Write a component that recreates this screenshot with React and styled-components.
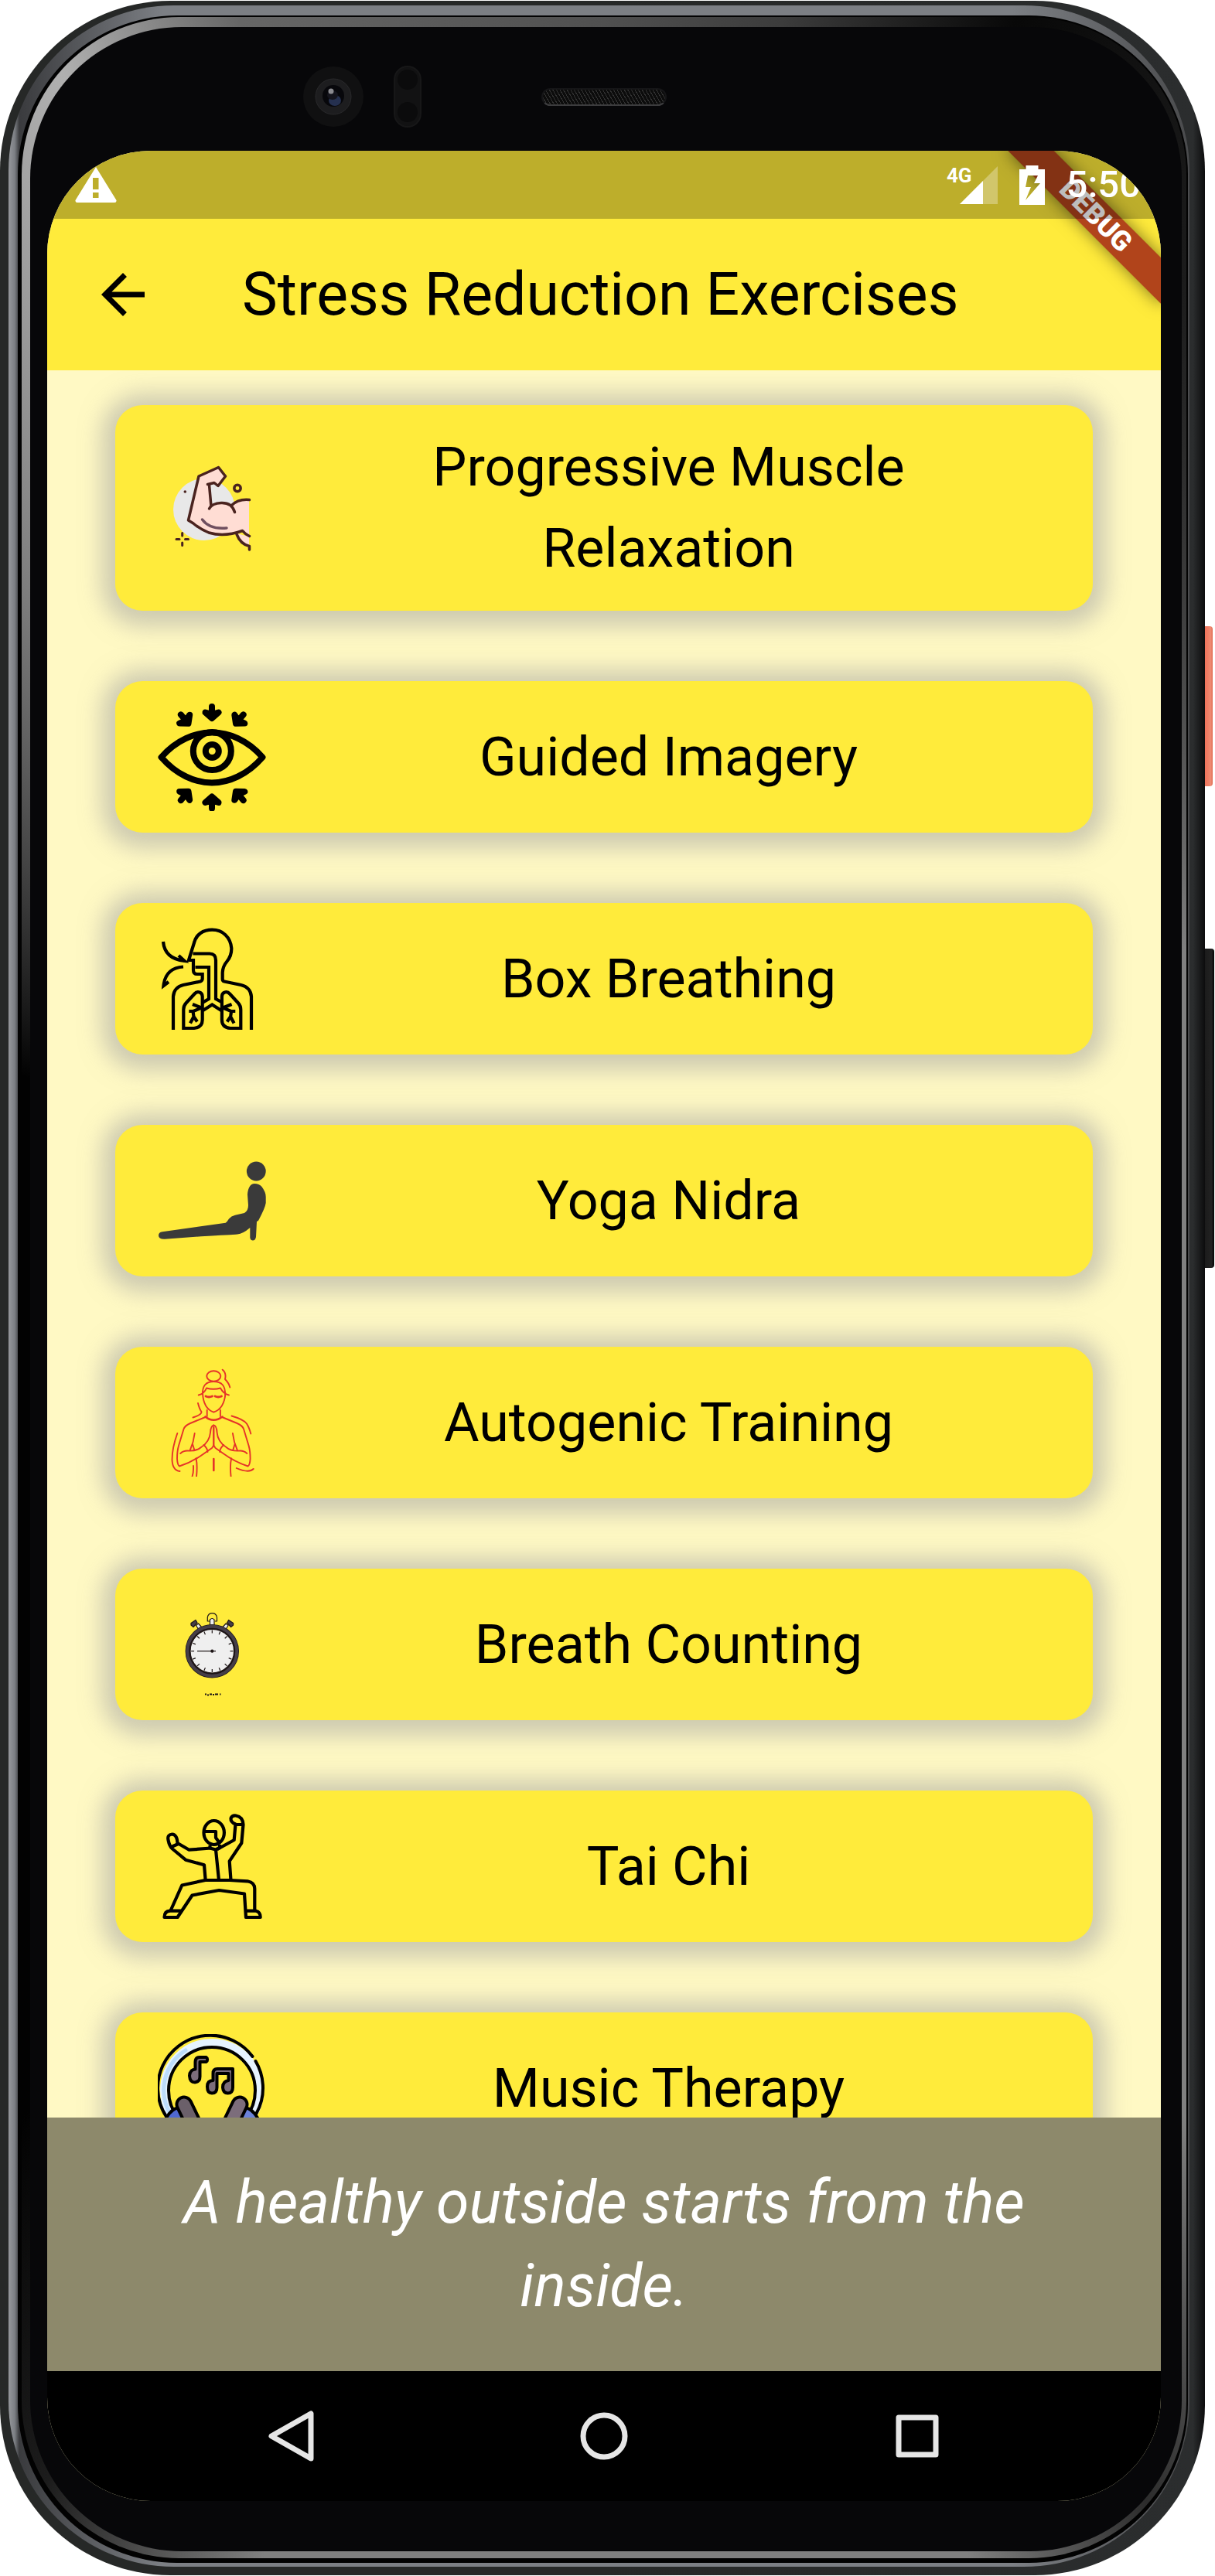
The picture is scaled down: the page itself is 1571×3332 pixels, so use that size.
import React from "react";
import styled, { createGlobalStyle, css } from "styled-components";

const yellow = "#ffeb3b";

const GlobalStyle = createGlobalStyle`
  *, *::before, *::after { box-sizing: border-box; }
  body {
    margin: 0;
    background: #fff;
    font-family: Roboto, "Noto Sans", sans-serif;
    color: #000;
  }
  button {
    margin: 0;
    padding: 0;
    border: 0;
    background: none;
    color: inherit;
    font: inherit;
    cursor: pointer;
  }
  ul { margin: 0; padding: 0; list-style: none; }
  svg { display: block; flex: none; }
`;

/* ---------- Phone body ---------- */

const Phone = styled.div`
  position: relative;
  z-index: 0;
  display: flex;
  height: calc(100vh - 2px);
  margin: 1px 13px 1px 0;
`;

const layer = css`
  display: flex;
  flex: 1;
  min-width: 0;
  min-height: 0;
`;

const Shell = styled.div`
  ${layer}
  padding: 6px 20px 11px 11px;
  border-radius: 220px;
  background: linear-gradient(to right, #262827 0 50%, #2b2d2e 99%, #0c0c0d);
`;

const Metal = styled.div`
  ${layer}
  padding: 13px 2px 5px 12px;
  border-radius: 214px;
  background: linear-gradient(to right, #96989c 0, #7c7f84 8px, #3a3b3e 14px, #7c7f84 200px, #7c7f84 85%, #4a4b4d);
`;

const Seam = styled.div`
  ${layer}
  padding: 2px 2px 6px 5px;
  border-radius: 206px;
  background: #020202;
`;

const Gloss = styled.div`
  ${layer}
  padding: 13px 6px 9px 11px;
  border-radius: 204px;
  background: conic-gradient(
    #505050 0deg, #3c3c3c 8deg, #080808 18deg, #1c1c1c 30deg,
    #808080 60deg, #808080 145deg, #2c2c2c 156deg, #808080 164deg,
    #808080 195deg, #1c1c1c 205deg, #020202 215deg, #020202 290deg,
    #7c7c7c 320deg, #b0b0b0 336deg, #666 344deg, #505050 360deg
  );
`;

const Glass = styled.div`
  ${layer}
  flex-direction: column;
  padding: 0 27px 65px 22px;
  border-radius: 196px;
  background: #070709;
`;

const SideButton = styled.span`
  position: absolute;
  z-index: -1;
  right: -${(p) => p.$reach}px;
  top: ${(p) => p.$top}px;
  width: 24px;
  height: ${(p) => p.$length}px;
  border-radius: 4px;
  background: ${(p) => p.$fill};
`;

const Sensors = styled.div`
  display: grid;
  grid-template-columns: 1fr auto 1fr;
  align-items: center;
  column-gap: 155px;
  height: 160px;
  padding-top: 20px;
  flex: none;
`;

const SensorGroup = styled.div`
  display: flex;
  justify-content: flex-end;
  gap: 38px;
`;

const Earpiece = styled.div`
  width: 162px;
  height: 23px;
  border: 2px solid #151517;
  border-bottom-color: #3c3c3e;
  border-radius: 12px;
  background: repeating-linear-gradient(60deg, #333 0 1px, #0c0c0c 1px 4px);
`;

/* ---------- Screen ---------- */

const Screen = styled.div`
  ${layer}
  flex-direction: column;
  overflow: hidden;
  border-radius: 134px;
  background: #fff9c4;
`;

const Header = styled.header`
  position: relative;
  z-index: 1;
  flex: none;
  background: ${yellow};
`;

const StatusBar = styled.div`
  position: relative;
  z-index: 2;
  display: flex;
  align-items: center;
  justify-content: space-between;
  height: 88px;
  padding: 0 26px 0 36px;
  background: rgba(0, 0, 0, 0.26);
  color: #fff;
`;

const StatusGroup = styled.div`
  display: flex;
  align-items: center;
  gap: 28px;
`;

const Clock = styled.span`
  font-size: 49px;
  font-weight: 500;
  line-height: 56px;
`;

const Network = styled.span`
  display: flex;
  align-items: flex-start;
`;

const NetworkType = styled.span`
  margin-right: -16px;
  font-size: 26px;
  font-weight: 700;
  line-height: 24px;
`;

const TitleBar = styled.div`
  display: flex;
  align-items: center;
  height: 196px;
`;

const BackButton = styled.button`
  display: flex;
  align-items: center;
  justify-content: center;
  width: 196px;
  height: 196px;
`;

const Title = styled.h1`
  margin: 0 0 0 56px;
  font-size: 77px;
  font-weight: 400;
  line-height: 90px;
`;

const DebugBanner = styled.span`
  position: absolute;
  z-index: 1;
  top: 63px;
  right: -56px;
  width: 280px;
  height: 42px;
  transform: rotate(45deg);
  background: rgba(155, 20, 18, 0.78);
  box-shadow: 0 0 21px rgba(0, 0, 0, 0.5);
  color: #fff;
  font-size: 36px;
  font-weight: 900;
  line-height: 42px;
  text-align: center;
`;

const List = styled.ul`
  display: flex;
  flex: 1;
  flex-direction: column;
  gap: 91px;
  min-height: 0;
  overflow: hidden;
  padding: 45px 88px 0;
`;

const Card = styled.button`
  display: flex;
  align-items: center;
  gap: 56px;
  width: 100%;
  padding: 28px 84px 28px 55px;
  border-radius: 35px;
  background: ${yellow};
  box-shadow: 0 3px 29px 17px rgba(158, 158, 158, 0.5);
`;

const CardLabel = styled.span`
  flex: 1;
  font-size: 70px;
  line-height: 105px;
  text-align: center;
`;

const Quote = styled.p`
  flex: none;
  margin: 0;
  padding: 56px 84px;
  background: #8d896b;
  color: #fff;
  font-size: 77px;
  font-style: italic;
  line-height: 108px;
  text-align: center;
`;

const SystemNav = styled.nav`
  display: grid;
  grid-template-columns: repeat(3, 1fr);
  flex: none;
  height: 168px;
  padding: 0 112px;
  background: #000;
`;

const NavButton = styled.button`
  display: flex;
  align-items: center;
  justify-content: center;
`;

/* ---------- Drawings ---------- */

const Icon = ({ children, ...rest }) => (
  <svg width="140" height="140" viewBox="0 0 140 140" fill="none" aria-hidden="true" {...rest}>
    {children}
  </svg>
);

const MuscleIcon = () => (
  <Icon strokeLinecap="round" strokeLinejoin="round">
    <circle cx="60" cy="72" r="40" fill="#e8e8e8" />
    <path
      d="M53 29 78 17.500 87.500 28.500 78 41 73 37.500 66.500 40 69 68Q82 60 95 67 105 58 118 59.500V107L109.500 99.500Q80 109 63 101 54 96 46 90L39.500 86Z"
      fill="#ffddd4"
    />
    <path d="M102 103 118 107V119Q106 115 102 103Z" fill="#ffddd4" />
    <g stroke="#4a231f" strokeWidth="3.500">
      <path d="M64.500 39.500 73 37.500 78 41.500 87.500 29 78.500 17.500 53 29 39.500 86 46 90Q54 97 66 102 86 108 109.500 99.500 113 104 118.500 106.500" />
      <path d="M66.500 40 69 68M66.500 71Q70 64 82 63.500 96 63 99.500 75.500M95 67Q104 58 118.500 59.500" />
      <path d="M102 104Q107 117 118.500 119.500V124" />
      <circle cx="103" cy="44.500" r="4.200" />
      <path d="M31.700 102.500V106M31.700 115V118.500M24 110.500H28M35.500 110.500H39.500" strokeWidth="3" />
    </g>
    <path d="M57.500 85Q67 98 89 96" stroke="#6f4f5f" strokeWidth="3.500" />
    <circle cx="35.300" cy="49" r="1.800" fill="#4a231f" />
  </Icon>
);

const inwardArrows = [
  [70, 13, 0],
  [35, 21.5, -40],
  [105.5, 21.5, 40],
  [70, 128.5, 180],
  [35, 120, 220],
  [105.5, 120, 140],
];

const EyeIcon = () => (
  <Icon stroke="#000" strokeWidth="8" strokeLinecap="round" strokeLinejoin="round">
    <path d="M4.500 70.500C24 48 48 38.500 70 38.500S116 48 135.500 70.500C116 93 92 103.500 70 103.500S24 93 4.500 70.500Z" />
    <circle cx="70.300" cy="62.500" r="24.500" />
    <circle cx="70.300" cy="62.500" r="8.500" />
    {inwardArrows.map(([x, y, turn]) => (
      <path
        key={`${x}-${y}`}
        transform={`translate(${x} ${y}) rotate(${turn})`}
        d="M0-8V2M-8.500-.5 0 7 8.500-.5 0 2Z"
      />
    ))}
  </Icon>
);

const Lung = ({ flip }) => (
  <g transform={flip ? "translate(140.600 0) scale(-1 1)" : undefined}>
    <path d="M57.700 93C57.700 87 51 85.500 47.500 89.500L36.500 101.500Q33.300 105 33.300 110V134H47Q57.700 133 57.700 123Z" />
    <path d="M57.700 108 45 103M40.300 112H46L57.700 107M45.500 112 46.500 119 42 127.500M46.500 119 51 125.500" />
  </g>
);

const BreathingIcon = () => (
  <Icon stroke="#000" strokeWidth="4.200">
    <path d="M121 136V93Q120 81 107.500 78L86 73.500Q83.700 73 83.700 70.500V62Q84 54 89.500 47.500C94 42 95.500 37 95.300 30.500 94 16 84 6.700 70.300 6.700 58 6.700 50 13 47.500 22L40 46H46V59Q46 64 51 64H57.700V70Q57.700 72.500 55 73.500L33 78Q21 81 20 93V136" />
    <path d="M45.500 37.500H67Q75 37.500 75 46V96L84 101M48.500 55H66V96L57.700 101M58.500 111 70.300 103.500 82 111" />
    <path d="M7 22Q9 44 34.500 47L27 40M33 54.500Q10 56 7.500 79L14 74" />
    <Lung />
    <Lung flip />
  </Icon>
);

const YogaIcon = () => (
  <Icon fill="#3a3a3a">
    <circle cx="127.300" cy="32" r="12.400" />
    <path d="M119 51.500Q121 48 125 48 131 48 134.500 52 139.700 59 139.700 65V73Q139 79 130 96L128 97 127 117Q126 121.500 123 121.500 120 121.500 119.300 118V105Q110 113 103 113.500T56 116.300L9 119.700Q1 120 1 115 1 111 6 110.300L87.700 98.700Q90 97 92 93.500 95 90 100 88.700L112 86Q117 83 117 76L116 62Q116.500 55 119 51.500Z" />
  </Icon>
);

const PrayerSide = ({ flip }) => (
  <g transform={flip ? "translate(144.600 0) scale(-1 1)" : undefined}>
    <path d="M61.500 63 42 71Q35 74 33.500 78.500L27 100Q25 107 25 117 25.500 125 28 126.500 45 121 60 110L70 103Q72.300 101 72.300 98V76" />
    <path d="M29.300 110Q33 106.500 38 106.500 50 107.500 56 102 67 95 68 83 68.500 74 72.300 73.500" />
    <path d="M59.500 99Q64 103 64.500 108M47.700 84Q46.500 95 41.700 106M45 98 47.500 106M49.500 116.500Q51.500 125 50 140M63.700 54V62" />
  </g>
);

const MeditationIcon = () => (
  <Icon stroke="#e53329" strokeWidth="1.900" strokeLinecap="round" strokeLinejoin="round">
    <ellipse cx="72.300" cy="10" rx="9" ry="6.800" />
    <path d="M58 32Q59 52 72.300 56.700 86 52 87.500 32M58 34Q57 17 72.300 17 88 17 87 34M52.700 34.500Q60 33 63 25.500 72 28 81 25.500 85 33 92 34.500" />
    <path d="M62 36Q66 38 70.500 36M74 36Q78 38 82.500 36" strokeWidth="2.800" />
    <path d="M61.500 62.500Q72 71 83.500 62.500" strokeWidth="2.600" />
    <PrayerSide />
    <PrayerSide flip />
    <path d="M72.300 117V132" strokeWidth="2.600" />
    <path d="M25.300 84Q18.500 103 18.500 118 19 132 28.500 133M46 126Q46.500 134 44.500 140M95.500 61.500Q111 66 115 71.500 118 76 120.300 84.500M101.700 129Q118 136 123.700 130M83.700 1.700Q89 6 87 14 92 19 93.300 24.500M52 45Q54 53 56.500 56 57 60 45.500 63.500" />
  </Icon>
);

const WatchKnob = ({ flip }) => (
  <g transform={flip ? "translate(140.600 0) scale(-1 1)" : undefined}>
    <path d="M49.500 45.500 52.500 43 57 48 53 51Z" fill="#eee" />
    <path d="M43 42.500 49 38.500 51 42 46 47.500 43 45Z" fill="#453e48" />
  </g>
);

const StopwatchIcon = () => (
  <Icon stroke="#1d1516" strokeWidth="1.200" strokeLinejoin="round">
    <path d="M67 40H64.300V35A6.200 6.500 0 0 1 76.500 35V40H74" />
    <WatchKnob />
    <WatchKnob flip />
    <path d="M67.500 45.500V38Q70.300 35 73 38V45.500Z" fill="#eee" />
    <circle cx="70.300" cy="78.700" r="31.300" stroke="#1d1516" strokeWidth="6.800" />
    <circle cx="70.300" cy="78.700" r="32" stroke="#453e48" strokeWidth="4" />
    <circle cx="70.300" cy="78.700" r="28.300" fill="#efefef" />
    {Array.from({ length: 16 }, (_, i) => (
      <path key={i} d="M70.300 51.500V55.500" transform={`rotate(${i * 22.5} 70.300 78.700)`} />
    ))}
    <path d="M51 78.700H75" />
    <circle cx="70.300" cy="78.700" r="1.500" fill="#1d1516" />
    <path d="M61 134.500h2m1 1h2m1-1h3m1 .5h2m1-.5h4m2 0h1.500" strokeWidth="1.800" />
  </Icon>
);

const TaiChiIcon = () => (
  <Icon stroke="#000" strokeWidth="4.200" strokeLinejoin="round">
    <ellipse cx="72.700" cy="26.500" rx="13.200" ry="15.500" />
    <path d="M60 25H75V33L80 40M67.500 43V46.500L75 48.500 80 46V42" />
    <path d="M69 46.500 40.500 48.700 25.500 40Q25 29 18.500 28.500 12 29 13.500 36 15 44 19 47.500L36 61.700 60 68.300 61.700 88M17.500 45 26.500 41" />
    <path d="M77 48 98.700 36 100.500 15.500Q94 13 94.500 8 96 4 101 4.500 110 6 110.500 16L108.300 40 92.700 63.300 94.500 88M100.300 16H110.300M75 48.500 79 88" />
    <path d="M16.500 127.500 31.300 94.500 61.500 88H93L116 89.300Q125.300 91 125.300 99V127.700" />
    <path d="M115.500 127.700H127Q132.700 129 132.700 136H114L112 105.500 79.300 101 44.500 107.500 25.500 136H8.500Q8.500 128 16 127.700H30" />
  </Icon>
);

const HeadphonesIcon = () => (
  <Icon strokeLinecap="round" strokeLinejoin="round">
    <circle cx="70" cy="73" r="62" stroke="#e6f3ff" strokeWidth="10" />
    <path d="M27 117A61 61 0 0 1 36 21" stroke="#bcdcfb" strokeWidth="5" />
    <path d="M122.500 29A68 68 0 1 0 126.500 35" stroke="#000" strokeWidth="4" />
    <circle cx="70" cy="73" r="56" stroke="#000" strokeWidth="4" />
    <path d="M8 114Q16 97 27 95L40 116Z" fill="#4f68d0" stroke="#000" strokeWidth="4" />
    <path d="M132 114Q124 97 113 95L100 116Z" fill="#6b82da" stroke="#000" strokeWidth="4" />
    <path d="M34 91 48 120M106 91 92 120" stroke="#000" strokeWidth="23" />
    <path d="M34 91 48 120" stroke="#6b606a" strokeWidth="15" />
    <path d="M106 91 92 120" stroke="#7c6d7b" strokeWidth="15" />
    <g fill="#7c6d7b" stroke="#000" strokeWidth="4">
      <path d="M54.500 55V36H62.500A3.500 3.500 0 0 0 62.500 30H54Q48.500 30 48.500 36V45.500Q41.500 46 41 54 41.500 62.500 48 62.500 54.500 62 54.500 55Z" />
      <path d="M97 45H77Q71.500 45 71.500 51V60Q64 60 64 68 64 76.500 70 76.500 76.500 76.500 76.500 69V51H91.500V60Q84 61 84 69 84.500 76.500 90.500 76.500 97 76.500 97 69Z" />
    </g>
  </Icon>
);

const BackArrowIcon = () => (
  <svg width="84" height="84" viewBox="0 0 24 24" aria-hidden="true">
    <path d="M20 11H7.830l5.590-5.590L12 4l-8 8 8 8 1.410-1.410L7.830 13H20z" />
  </svg>
);

const WarningIcon = () => (
  <svg width="54" height="46" viewBox="0 0 54 46" aria-hidden="true">
    <path d="M27 0 53.500 43Q54 46 51 46H3Q0 46 .5 43ZM23 14V29H30.500V14ZM23 33V40H30.500V33Z" fill="#fff" fillRule="evenodd" />
  </svg>
);

const SignalIcon = () => (
  <svg width="49" height="49" viewBox="0 0 49 49" aria-hidden="true">
    <path d="M0 49 49 0V49Z" fill="#fff" opacity=".3" />
    <path d="M0 49 30 19V49Z" fill="#fff" />
  </svg>
);

const BatteryIcon = () => (
  <svg width="33" height="51" viewBox="0 0 33 51" aria-hidden="true">
    <path d="M8.500 0H24.500V5H33V51H0V5H8.500ZM11 13 8 28H15L8 45 27 23H19L24 13Z" fill="#fff" fillRule="evenodd" />
  </svg>
);

const CameraDrawing = () => (
  <svg width="80" height="80" viewBox="0 0 80 80" aria-hidden="true">
    <circle cx="40" cy="40" r="39" fill="#101011" />
    <circle cx="40" cy="40" r="23" fill="#1d1d1f" stroke="#29292b" />
    <circle cx="40" cy="39" r="14" fill="#07070b" />
    <ellipse cx="42" cy="45" rx="8" ry="7" fill="#25304f" />
    <ellipse cx="39" cy="38" rx="7" ry="6" fill="#14141c" />
    <circle cx="37" cy="33" r="3.500" fill="#8b8b90" />
  </svg>
);

const ProximityDrawing = () => (
  <svg width="36" height="80" viewBox="0 0 36 80" aria-hidden="true">
    <rect x="1" y="1" width="34" height="78" rx="17" fill="#121213" stroke="#171718" strokeWidth="2" />
    <circle cx="18" cy="18" r="13" fill="#0b0b0c" />
    <circle cx="18" cy="60" r="13" fill="#0b0b0c" />
  </svg>
);

const NavGlyph = ({ children }) => (
  <svg
    width="84"
    height="84"
    viewBox="0 0 84 84"
    fill="none"
    stroke="#e6e6e6"
    strokeWidth="7"
    strokeLinejoin="round"
    aria-hidden="true"
  >
    {children}
  </svg>
);

/* ---------- Page ---------- */

const exercises = [
  { name: "Progressive Muscle Relaxation", Drawing: MuscleIcon },
  { name: "Guided Imagery", Drawing: EyeIcon },
  { name: "Box Breathing", Drawing: BreathingIcon },
  { name: "Yoga Nidra", Drawing: YogaIcon },
  { name: "Autogenic Training", Drawing: MeditationIcon },
  { name: "Breath Counting", Drawing: StopwatchIcon },
  { name: "Tai Chi", Drawing: TaiChiIcon },
  { name: "Music Therapy", Drawing: HeadphonesIcon },
];

export default function App() {
  return (
    <>
      <GlobalStyle />
      <Phone>
        <SideButton $top={809} $length={207} $reach={10} $fill="linear-gradient(to right, #e8593f 50%, #f0745c 60%, #ee8a72 90%, #e06a50)" />
        <SideButton $top={1226} $length={413} $reach={12} $fill="linear-gradient(to right, #1b1b1b 50%, #222 85%, #050505)" />
        <Shell>
          <Metal>
            <Seam>
              <Gloss>
                <Glass>
                  <Sensors>
                    <SensorGroup>
                      <CameraDrawing />
                      <ProximityDrawing />
                    </SensorGroup>
                    <Earpiece />
                  </Sensors>
                  <Screen>
                    <Header>
                      <StatusBar>
                        <WarningIcon />
                        <StatusGroup>
                          <Network>
                            <NetworkType>4G</NetworkType>
                            <SignalIcon />
                          </Network>
                          <BatteryIcon />
                          <Clock>5:50</Clock>
                        </StatusGroup>
                      </StatusBar>
                      <TitleBar>
                        <BackButton type="button" aria-label="Back">
                          <BackArrowIcon />
                        </BackButton>
                        <Title>Stress Reduction Exercises</Title>
                      </TitleBar>
                      <DebugBanner>DEBUG</DebugBanner>
                    </Header>
                    <List>
                      {exercises.map(({ name, Drawing }) => (
                        <li key={name}>
                          <Card type="button">
                            <Drawing />
                            <CardLabel>{name}</CardLabel>
                          </Card>
                        </li>
                      ))}
                    </List>
                    <Quote>A healthy outside starts from the inside.</Quote>
                    <SystemNav aria-label="System">
                      <NavButton type="button" aria-label="Back">
                        <NavGlyph>
                          <path d="M68 13V71L17 42Z" />
                        </NavGlyph>
                      </NavButton>
                      <NavButton type="button" aria-label="Home">
                        <NavGlyph>
                          <circle cx="42" cy="42" r="27" />
                        </NavGlyph>
                      </NavButton>
                      <NavButton type="button" aria-label="Recent apps">
                        <NavGlyph>
                          <rect x="18" y="18" width="48" height="48" />
                        </NavGlyph>
                      </NavButton>
                    </SystemNav>
                  </Screen>
                </Glass>
              </Gloss>
            </Seam>
          </Metal>
        </Shell>
      </Phone>
    </>
  );
}
